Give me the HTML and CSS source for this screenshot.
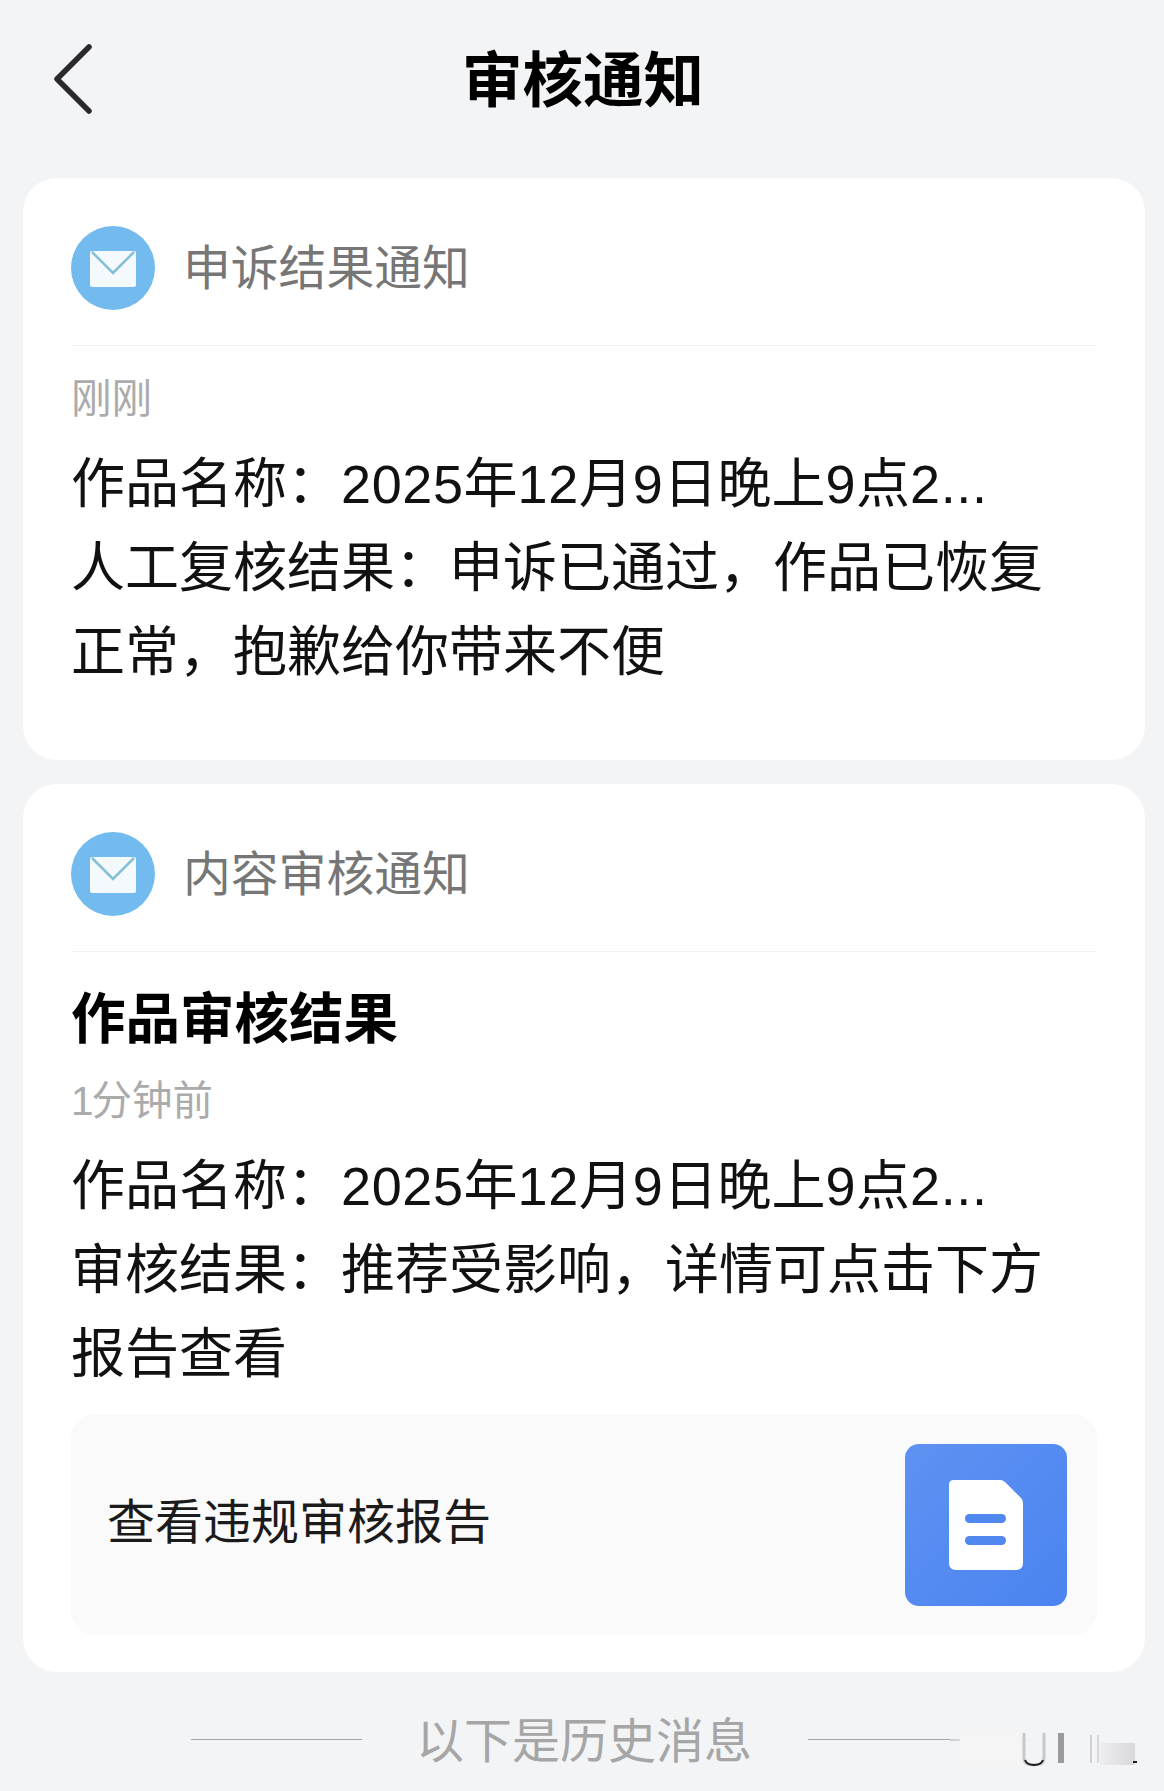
FILE: index.html
```html
<!DOCTYPE html>
<html lang="zh">
<head>
<meta charset="utf-8">
<title>审核通知</title>
<link rel="stylesheet" href="styles.css">
</head>
<body>
<div class="page">
  <header class="nav">
    <svg class="back" viewBox="0 0 42 72" width="42" height="72"><path d="M37 4 5 36l32 32" fill="none" stroke="#2a2a2c" stroke-width="5.5" stroke-linecap="round" stroke-linejoin="round"/></svg>
    <h1 class="title">审核通知</h1>
    <span></span>
  </header>

  <section class="card card-first">
    <div class="head">
      <svg class="mail" viewBox="0 0 84 84" width="84" height="84"><circle cx="42" cy="42" r="42" fill="#73bbef"/><rect x="19" y="25" width="46" height="36" rx="2" fill="#f4f9fd"/><path d="M21 26 42 47 63 26" fill="none" stroke="#84bfd8" stroke-width="2.5"/></svg>
      <span class="head-label">申诉结果通知</span>
    </div>
    <div class="time time-first">刚刚</div>
    <div class="body-text">作品名称&#xFF1A;<span class="num">2025</span>年<span class="num">12</span>月<span class="num">9</span>日晚上<span class="num">9</span>点<span class="num">2...</span><br>人工复核结果&#xFF1A;申诉已通过&#xFF0C;作品已恢复<br>正常&#xFF0C;抱歉给你带来不便</div>
  </section>

  <section class="card card-second">
    <div class="head">
      <svg class="mail" viewBox="0 0 84 84" width="84" height="84"><circle cx="42" cy="42" r="42" fill="#73bbef"/><rect x="19" y="25" width="46" height="36" rx="2" fill="#f4f9fd"/><path d="M21 26 42 47 63 26" fill="none" stroke="#84bfd8" stroke-width="2.5"/></svg>
      <span class="head-label">内容审核通知</span>
    </div>
    <h2 class="card-title">作品审核结果</h2>
    <div class="time"><span class="num-narrow">1</span>分钟前</div>
    <div class="body-text">作品名称&#xFF1A;<span class="num">2025</span>年<span class="num">12</span>月<span class="num">9</span>日晚上<span class="num">9</span>点<span class="num">2...</span><br>审核结果&#xFF1A;推荐受影响&#xFF0C;详情可点击下方<br>报告查看</div>
    <div class="report">
      <span class="report-label">查看违规审核报告</span>
      <div class="report-icon">
        <svg viewBox="0 0 74 90" width="74" height="90"><path d="M5 0h46q3 0 5 2l16 16q2 2 2 5v60q0 7-7 7H7q-7 0-7-7V5q0-5 5-5z" fill="#fff"/><rect x="16" y="34" width="41" height="9" rx="4.5" fill="#5088f0"/><rect x="16" y="56" width="41" height="9" rx="4.5" fill="#5088f0"/></svg>
      </div>
    </div>
  </section>

  <footer class="history">
    <span class="rule rule-left"></span>
    <span class="history-text">以下是历史消息</span>
    <span class="rule"></span>
    <svg class="smudge" viewBox="0 0 190 44" width="190" height="44">
      <defs>
        <linearGradient id="fade" x1="0" x2="1" y1="0" y2="0"><stop offset="0" stop-color="#eeeef0"/><stop offset="1" stop-color="#d8d8da"/></linearGradient>
        <linearGradient id="base" x1="0" x2="1" y1="0" y2="0"><stop offset="0" stop-color="#a6a6a6" stop-opacity="0.5"/><stop offset="0.3" stop-color="#c8c8ca" stop-opacity="0.2"/><stop offset="1" stop-color="#f3f4f6" stop-opacity="0"/></linearGradient>
      </defs>
      <rect x="0" y="0" width="190" height="44" fill="#f3f4f6"/>
      <rect x="0" y="14" width="120" height="2" fill="url(#base)"/>
      <rect x="10" y="6" width="60" height="34" fill="#f5f5f6"/>
      <rect x="150" y="18" width="35" height="22" fill="url(#fade)"/>
      <path d="M74 8v26q0 6 10 6t10-6V8" fill="none" stroke="#c8c8ca" stroke-width="3"/>
      <path d="M75 35q2 5 9 5t9-5" fill="none" stroke="#1c1c1e" stroke-width="2"/>
      <rect x="108" y="8" width="6" height="30" fill="#9a9a9c"/>
      <rect x="140" y="10" width="2" height="28" fill="#d0d0d2"/>
      <rect x="147" y="10" width="2" height="28" fill="#d8d8da"/>
      <rect x="183" y="36" width="4" height="2" fill="#1c1c1e"/>
    </svg>
  </footer>
</div>
</body>
</html>
```
FILE: styles.css
```css
* { box-sizing: border-box; }
html, body { margin: 0; padding: 0; }
body {
  background: #f3f4f6;
  font-family: "Noto Sans CJK SC", "Liberation Sans", sans-serif;
  color: #111;
}
.page {
  width: 1164px;
  height: 1791px;
  overflow: hidden;
  padding: 0 19px 0 23px;
}
.nav {
  height: 178px;
  margin: 0 -19px 0 -23px;
  padding: 0 0 26px 52px;
  display: grid;
  grid-template-columns: 1fr auto 1fr;
  align-items: center;
}
.back { display: block; margin-top: 6px; }
.title {
  margin: 0;
  font-size: 60.5px;
  font-weight: 700;
  line-height: 80px;
  color: #000;
  position: relative;
  left: -25px;
}
.card {
  background: #fff;
  border-radius: 34px;
  padding: 48px 48px 0;
}
.card-first { height: 582px; margin-bottom: 24px; }
.card-second { height: 888px; }
.head {
  height: 120px;
  padding-bottom: 36px;
  border-bottom: 1px solid #f1f1f2;
  display: flex;
  align-items: center;
  gap: 28px;
}
.mail { flex: none; display: block; }
.head-label {
  font-size: 47.8px;
  line-height: 84px;
  color: #767676;
  margin-top: -6px;
}
.time {
  font-size: 40.5px;
  line-height: 52px;
  color: #ababab;
  height: 68px;
}
.time-first { margin-top: 24px; }
.num-narrow { font-family: "Liberation Sans", sans-serif; letter-spacing: -2px; line-height: 1; }
.card-title {
  margin: 25px 0 0;
  font-size: 54.5px;
  font-weight: 700;
  line-height: 76px;
  height: 95px;
  color: #000;
}
.body-text {
  font-size: 54px;
  line-height: 84px;
  color: #111;
  white-space: nowrap;
}
.num { font-family: "Liberation Sans", sans-serif; letter-spacing: 0.6px; line-height: 1; }
.report {
  margin-top: 22px;
  height: 221px;
  background: #fafafa;
  border-radius: 24px;
  display: flex;
  align-items: center;
  justify-content: space-between;
  padding: 0 30px 0 36px;
}
.report-label {
  font-size: 48px;
  line-height: 60px;
  color: #1b1b1b;
  margin-bottom: 14px;
}
.report-icon {
  width: 162px;
  height: 162px;
  border-radius: 14px;
  background: linear-gradient(135deg, #5e92f2, #4b84f0);
  display: flex;
  align-items: center;
  justify-content: center;
}
.report-icon svg { display: block; }
.history {
  position: relative;
  height: 136px;
  display: flex;
  align-items: center;
  justify-content: center;
  margin: 0 -19px 0 -23px;
  gap: 56px;
  padding-left: 6px;
}
.rule { width: 171px; height: 1px; background: #a6a6a6; flex: none; margin-bottom: 2px; }
.rule-left { margin-right: -2px; }
.history-text {
  font-size: 48px;
  line-height: 60px;
  color: #a6a6a6;
  flex: none;
  margin-bottom: 6px;
}
.smudge { position: absolute; left: 950px; top: 53px; display: block; }
```
